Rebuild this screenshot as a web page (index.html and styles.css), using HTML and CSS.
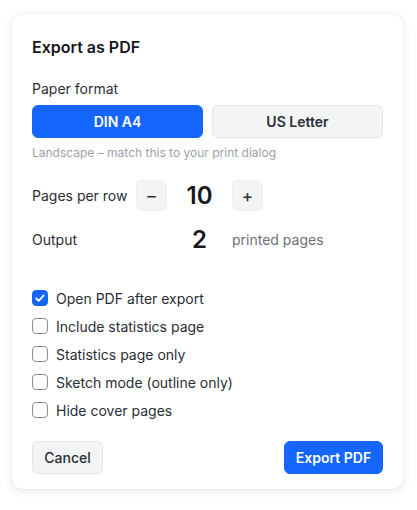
FILE: index.html
```html
<!DOCTYPE html>
<html>
<head>
<meta charset="utf-8">
<link rel="stylesheet" href="styles.css">
</head>
<body>
<div class="dialog">
  <h1 class="title">Export as PDF</h1>

  <div class="label">Paper format</div>
  <div class="seg">
    <button class="seg-btn active">DIN A4</button>
    <button class="seg-btn">US Letter</button>
  </div>
  <div class="hint">Landscape – match this to your print dialog</div>

  <div class="grid">
    <div class="row-label">Pages per row</div>
    <button class="step">–</button>
    <div class="num">10</div>
    <button class="step">+</button>
    <div class="fill"></div>

    <div class="row-label">Output</div>
    <div class="fill"></div>
    <div class="num">2</div>
    <div class="unit">printed pages</div>
  </div>

  <div class="checks">
    <label class="check"><span class="box on"><svg viewBox="0 0 16 16" width="16" height="16"><path d="M4.2 8.3l2.5 2.5 5-5.4" fill="none" stroke="#fff" stroke-width="1.8" stroke-linecap="round" stroke-linejoin="round"/></svg></span>Open PDF after export</label>
    <label class="check"><span class="box"></span>Include statistics page</label>
    <label class="check"><span class="box"></span>Statistics page only</label>
    <label class="check"><span class="box"></span>Sketch mode (outline only)</label>
    <label class="check"><span class="box"></span>Hide cover pages</label>
  </div>

  <div class="footer">
    <button class="btn secondary">Cancel</button>
    <button class="btn primary">Export PDF</button>
  </div>
</div>
</body>
</html>
```

FILE: styles.css
```css
* { box-sizing: border-box; }
html, body { margin: 0; padding: 0; background: #ffffff; }
body {
  font-family: Inter, "Noto Sans", "Liberation Sans", sans-serif;
  color: #1f2329;
  padding: 14px 14px 21px 12px;
}
.dialog {
  width: 391px;
  height: 475px;
  background: #fff;
  border-radius: 10px;
  box-shadow: 0 2px 10px rgba(0,0,0,0.10), 0 0 1px rgba(0,0,0,0.12);
  padding: 20px 20px 15px 20px;
  display: flex;
  flex-direction: column;
}
.title {
  margin: 0;
  font-size: 16px;
  font-weight: 600;
  line-height: 26px;
  color: #15181d;
}
.label {
  margin-top: 19px;
  font-size: 14px;
  line-height: 20px;
  color: #2a2e35;
}
.seg {
  margin-top: 6px;
  display: grid;
  grid-template-columns: 1fr 1fr;
  gap: 9px;
}
.seg-btn {
  height: 33px;
  border-radius: 6px;
  font-family: inherit;
  font-size: 14px;
  font-weight: 600;
  border: 1px solid #e4e6ea;
  background: #f3f4f6;
  color: #2a2e35;
  padding: 0;
}
.seg-btn.active {
  background: #1565ff;
  border-color: #1565ff;
  color: #fff;
}
.hint {
  margin-top: 7px;
  font-size: 12px;
  line-height: 16px;
  color: #9ca0a7;
}
.grid {
  margin-top: 19px;
  display: grid;
  grid-template-columns: 104px 31px 65px 31px 1fr;
  grid-template-rows: 31px 31px;
  row-gap: 13px;
  align-items: center;
}
.row-label {
  font-size: 14px;
  color: #2a2e35;
}
.step {
  width: 31px;
  height: 31px;
  border-radius: 6px;
  border: 1px solid #eceef1;
  background: #f3f4f6;
  font-family: inherit;
  font-size: 17px;
  font-weight: 500;
  color: #2a2e35;
  padding: 0;
  display: flex;
  align-items: center;
  justify-content: center;
}
.num {
  text-align: center;
  font-size: 24px;
  font-weight: 600;
  color: #15181d;
}
.unit {
  grid-column: 4 / 6;
  font-size: 14px;
  color: #6b7079;
  white-space: nowrap;
}
.checks {
  margin-top: 33px;
  display: flex;
  flex-direction: column;
  gap: 8px;
}
.check {
  display: flex;
  align-items: center;
  gap: 8px;
  height: 20px;
  font-size: 14px;
  color: #2a2e35;
}
.box {
  width: 16px;
  height: 16px;
  border-radius: 4px;
  border: 1px solid #8a8f97;
  background: #fff;
  flex-shrink: 0;
  display: flex;
}
.box.on {
  background: #1565ff;
  border-color: #1565ff;
}
.box svg { margin: -1px; }
.footer {
  margin-top: auto;
  display: flex;
  justify-content: space-between;
}
.btn {
  height: 33px;
  border-radius: 6px;
  font-family: inherit;
  font-size: 14px;
  padding: 0;
  white-space: nowrap;
}
.btn.secondary {
  width: 71px;
  background: #f3f4f6;
  border: 1px solid #e4e6ea;
  color: #2a2e35;
  font-weight: 500;
}
.btn.primary {
  width: 99px;
  background: #1565ff;
  border: 1px solid #1565ff;
  color: #fff;
  font-weight: 600;
}
```
